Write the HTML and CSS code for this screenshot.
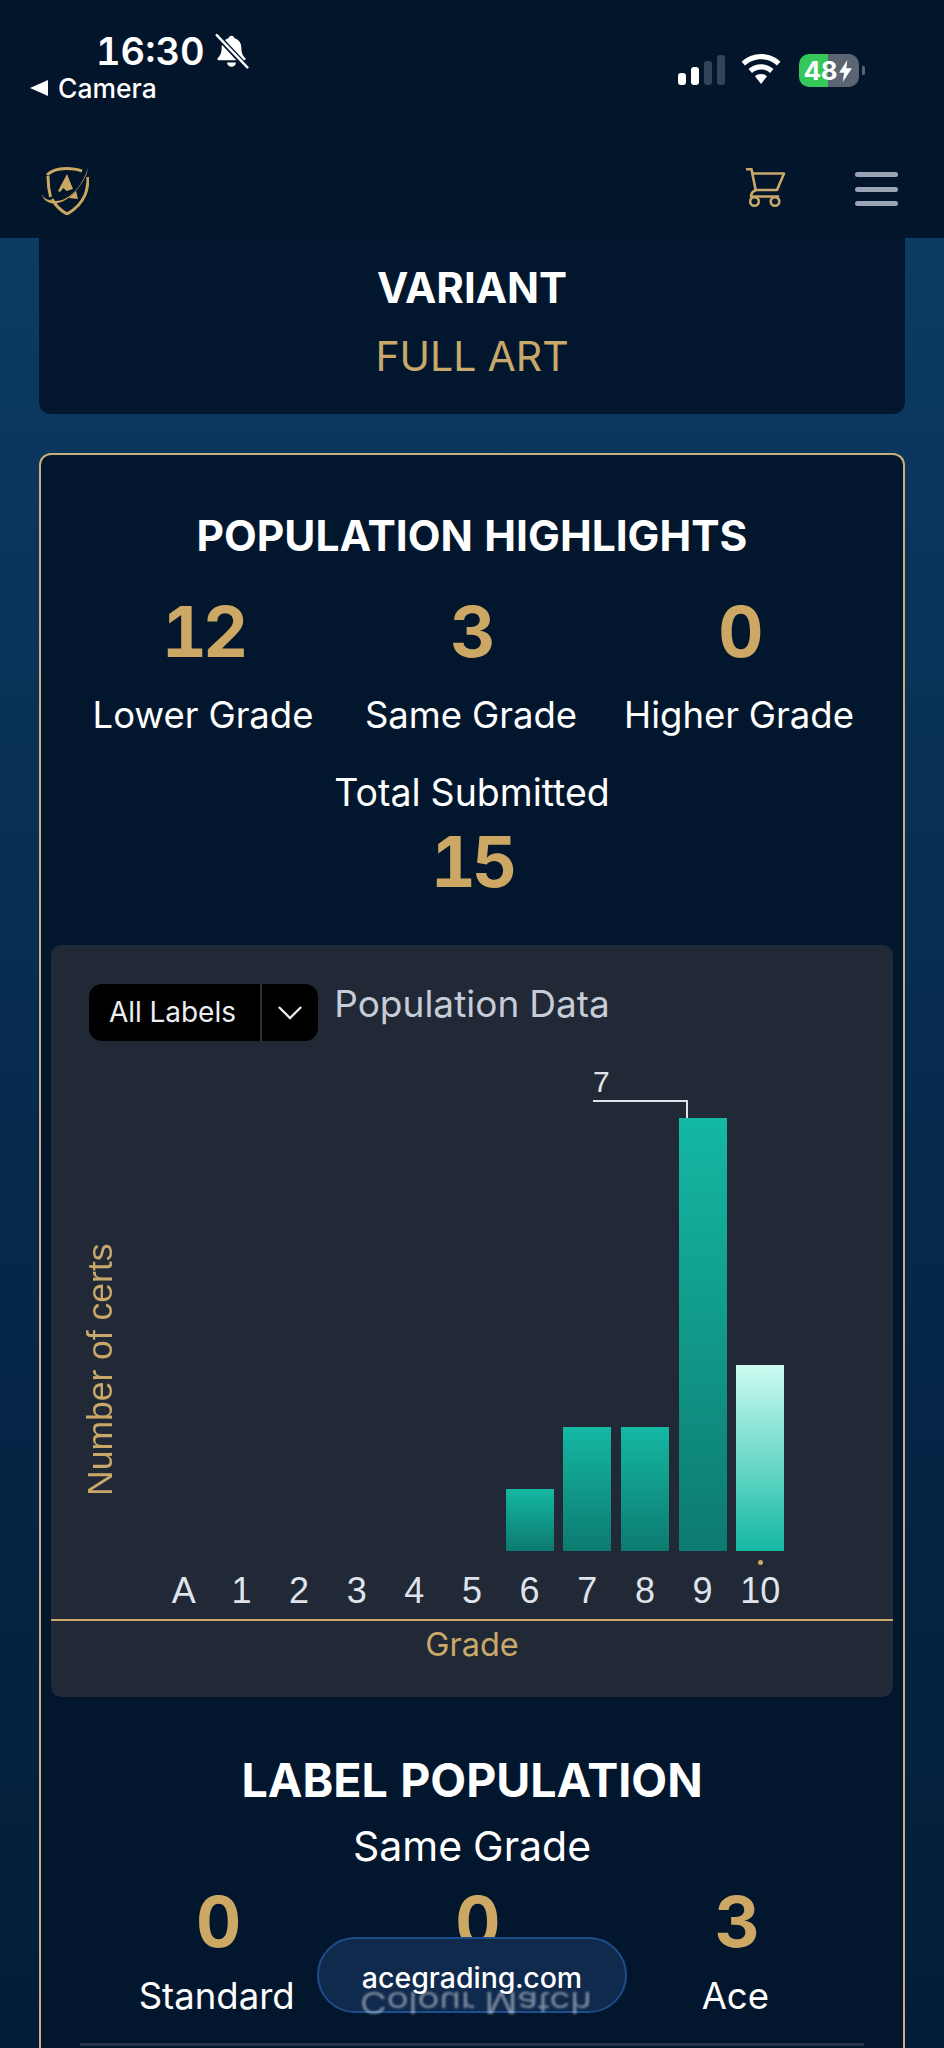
FILE: index.html
```html
<!DOCTYPE html>
<html lang="en">
<head>
<meta charset="utf-8">
<title>Population Report</title>
<link rel="stylesheet" href="styles.css">
</head>
<body>
<header class="topbar">
  <div class="status">
    <div class="status-left">
      <div class="time-row">
        <span class="time">16:30</span>
        <svg class="bell" viewBox="0 0 32 32"><path fill="#fff" d="M16 2c-1.500 0-2.500 1-2.700 2.300C9 5.500 7 9 7 13c0 5-1.500 7.500-3.500 9.500-.8.800-.3 2 .8 2h23.400c1.100 0 1.600-1.200.8-2C26.500 20.500 25 18 25 13c0-4-2-7.500-6.300-8.700C18.500 3 17.500 2 16 2z"/><path fill="#fff" d="M12 26.500h8a4 4 0 0 1-8 0z"/><path stroke="#02152b" stroke-width="5" d="M2 1l28 30"/><path stroke="#fff" stroke-width="2.200" stroke-linecap="round" d="M2.500 1.500l28 29.500"/></svg>
      </div>
      <div class="back-row"><span class="back-arrow"></span><span class="back-text">Camera</span></div>
    </div>
    <div class="status-right">
      <div class="signal"><i class="sig s1"></i><i class="sig s2"></i><i class="sig s3"></i><i class="sig s4"></i></div>
      <svg class="wifi" viewBox="0 0 40 30"><path fill="#fff" d="M20 0C12.500 0 5.700 3 .6 7.700L4 11.500C8.200 7.600 13.800 5.200 20 5.200s11.800 2.400 16 6.300l3.400-3.800C34.300 3 27.500 0 20 0z"/><path fill="#fff" d="M20 10.200c-4.800 0-9.200 1.900-12.500 4.900l3.500 3.900c2.400-2.200 5.500-3.500 9-3.500s6.600 1.300 9 3.500l3.500-3.900c-3.300-3-7.700-4.900-12.500-4.900z"/><path fill="#fff" d="M20 20c-2.300 0-4.400.900-6 2.300L20 30l6-7.700C24.400 20.900 22.300 20 20 20z"/></svg>
      <div class="battery">
        <div class="battery-body">
          <span class="battery-num">48</span>
          <svg class="bolt" viewBox="0 0 14 24"><path fill="#fff" d="M9 0L0 14h5.500L4 24l10-15H8z"/></svg>
        </div>
        <span class="battery-nub"></span>
      </div>
    </div>
  </div>
  <nav class="navbar">
    <svg class="logo" viewBox="0 0 48 50" fill="none" stroke="#cba862"><path stroke-width="3" d="M6 10C10 6 18 3.500 25 3.500c6 0 12 1 16 2.500"/><path stroke-width="3" d="M7 11c0 8 1 15 2.500 21"/><path stroke-width="3" d="M47 12c0 7-1 13-3 18-3 7-9 14-18 19-7-4-12-9-15-15"/><path fill="#cba862" stroke="none" d="M.5 29c2 5 9 7 14 7 13 0 26-13 32.500-33-.5 5-3 10-5.500 14C34 29 24 38.500 13 38.500 7 38.500 1.500 34 .5 29z"/><path fill="#cba862" stroke="none" d="M26 9l6 15-6.500 2-3-3-3.500 4-2-1z"/><path fill="#cba862" stroke="none" d="M28 33l7-7 2 8z"/></svg>
    <div class="nav-actions">
      <svg class="cart" viewBox="0 0 40 40" fill="none" stroke="#c9a86a" stroke-width="2.600" stroke-linecap="round" stroke-linejoin="round"><path d="M.8 1.200h4.700l4.200 21"/><path d="M6.300 5.500H38L31 22H9.700"/><path d="M9.700 22c-3 1.500-4.700 3.500-4.700 6.500h27"/><circle cx="8.500" cy="33.500" r="4.300"/><circle cx="29" cy="33.500" r="4.300"/></svg>
      <div class="menu"><i></i><i></i><i></i></div>
    </div>
  </nav>
</header>

<main class="content">
  <section class="card card-plain">
    <h2 class="variant-title">VARIANT</h2>
    <p class="variant-value">FULL ART</p>
  </section>

  <section class="card card-gold">
    <h2 class="section-title">POPULATION HIGHLIGHTS</h2>
    <div class="stats stats-wide">
      <div class="stat"><div class="stat-value">12</div><div class="stat-label">Lower Grade</div></div>
      <div class="stat"><div class="stat-value">3</div><div class="stat-label">Same Grade</div></div>
      <div class="stat"><div class="stat-value">0</div><div class="stat-label">Higher Grade</div></div>
    </div>
    <div class="total">
      <div class="stat-label">Total Submitted</div>
      <div class="stat-value total-value">15</div>
    </div>

    <div class="chart">
      <div class="dropdown">
        <span class="dropdown-text">All Labels</span>
        <span class="dropdown-arrow"><svg viewBox="0 0 28 16" fill="none" stroke="#eceef2" stroke-width="2.400"><path d="M2 2l12 12L26 2"/></svg></span>
      </div>
      <div class="chart-title">Population Data</div>
      <div class="chart-body">
        <div class="y-axis"><span>Number of certs</span></div>
        <div class="plot-wrap">
          <div class="plot">
            <div class="cell"></div><div class="cell"></div><div class="cell"></div><div class="cell"></div><div class="cell"></div><div class="cell"></div>
            <div class="cell"><div class="bar h1"></div></div>
            <div class="cell"><div class="bar h2"></div></div>
            <div class="cell"><div class="bar h2"></div></div>
            <div class="cell"><div class="bar h7"></div></div>
            <div class="cell"><div class="bar h3 bar-light"></div></div>
            <div class="leader"><span class="leader-num">7</span></div>
          </div>
          <div class="dot-row"><span class="dot"></span></div>
          <div class="grades">
            <span>A</span><span>1</span><span>2</span><span>3</span><span>4</span><span>5</span><span>6</span><span>7</span><span>8</span><span>9</span><span>10</span>
          </div>
        </div>
      </div>
      <div class="x-line"></div>
      <div class="x-title">Grade</div>
    </div>

    <h2 class="section-title label-title">LABEL POPULATION</h2>
    <div class="sub-title">Same Grade</div>
    <div class="stats stats-narrow">
      <div class="stat"><div class="stat-value">0</div><div class="stat-label">Standard</div></div>
      <div class="stat"><div class="stat-value">0</div><div class="stat-label stat-ghost">Colour Match</div></div>
      <div class="stat"><div class="stat-value">3</div><div class="stat-label">Ace</div></div>
    </div>
    <div class="separator"></div>
  </section>
</main>

<div class="url-pill"><span>acegrading.com</span></div>
</body>
</html>
```
FILE: styles.css
```css
* { box-sizing: border-box; }
html, body { margin: 0; padding: 0; }
body {
  position: relative;
  width: 944px;
  height: 2048px;
  overflow: hidden;
  font-family: Inter, "Liberation Sans", sans-serif;
  font-variant-numeric: tabular-nums;
  color: #fff;
  background: linear-gradient(180deg, #0c3b63 0, #0c3b63 240px, #062a4d 1100px, #031d38 2048px);
}
h2, p { margin: 0; }

/* header */
.topbar { height: 238px; background: #02152b; }
.status { height: 130px; display: flex; justify-content: space-between; }
.status-left { padding: 30px 0 0 30px; }
.time-row { display: flex; align-items: center; padding-left: 66px; height: 42px; }
.time { font-size: 38px; font-weight: 600; line-height: 42px; }
.bell { width: 35px; height: 36px; margin-left: 9px; }
.back-row { display: flex; align-items: center; height: 32px; margin-top: 0; }
.back-arrow { width: 0; height: 0; border-style: solid; border-width: 8.500px 18px 8.500px 0; border-color: transparent #fff transparent transparent; }
.back-text { margin-left: 10px; font-size: 26.500px; font-weight: 500; line-height: 32px; }
.status-right { display: flex; align-items: flex-start; padding: 54px 79px 0 0; }
.signal { display: flex; align-items: flex-end; gap: 4.500px; height: 31px; }
.sig { display: block; width: 8.500px; border-radius: 3px; background: #fff; }
.s1 { height: 12px; }
.s2 { height: 18px; }
.s3 { height: 24px; background: #33435a; }
.s4 { height: 30px; background: #33435a; }
.wifi { width: 40px; height: 30px; margin-left: 16px; }
.battery { display: flex; align-items: center; margin-left: 18px; }
.battery-body {
  width: 60px; height: 33px; border-radius: 10px;
  display: flex; align-items: center; padding-left: 5px;
  background: linear-gradient(90deg, #35c759 0, #35c759 29px, #5b6472 29px, #5b6472 100%);
}
.battery-num { font-size: 26px; font-weight: 700; line-height: 33px; }
.bolt { width: 13px; height: 22px; margin-left: 1px; }
.battery-nub { width: 3px; height: 9px; margin-left: 3px; border-radius: 0 2px 2px 0; background: #5b6472; }
.navbar { height: 108px; display: flex; justify-content: space-between; padding: 35px 46px 0 41px; }
.logo { width: 48px; height: 50px; }
.nav-actions { display: flex; gap: 69px; padding-top: 3px; }
.cart { width: 40px; height: 40px; }
.menu { display: flex; flex-direction: column; gap: 9.500px; padding-top: 4px; }
.menu i { display: block; width: 43px; height: 5px; border-radius: 3px; background: #9aa4b5; }

/* cards */
.content { display: flex; flex-direction: column; gap: 39px; padding: 0 39px; }
.card { background: #02172d; }
.card-plain { height: 176px; border-radius: 0 0 12px 12px; text-align: center; padding-top: 28px; }
.variant-title { font-size: 42px; font-weight: 700; line-height: 44px; }
.variant-value { margin-top: 24px; font-size: 41px; font-weight: 400; line-height: 44px; color: #c9a86a; }
.card-gold { border: 2px solid #c6ae80; border-bottom: 0; border-radius: 12px 12px 0 0; padding: 56px 10px 0; height: 1700px; }
.section-title { text-align: center; font-size: 42.500px; font-weight: 700; line-height: 50px; }

.stats { display: grid; grid-template-columns: repeat(3, 1fr); text-align: center; }
.stats-wide { width: 804px; margin: 36px auto 0; transform: translateX(-1px); }
.stats-narrow { width: 778px; margin: 19px 0 0 36px; }
.stat-value { font-size: 70px; font-weight: 700; line-height: 70px; letter-spacing: -4px; color: #cda864; }
.stat-label { font-size: 36.500px; line-height: 44px; margin-top: 26px; white-space: nowrap; }
.stats-narrow .stat-label { margin-top: 17px; }
.total { margin-top: 34px; text-align: center; }
.total .stat-label { margin-top: 0; font-size: 37.500px; }
.total-value { margin-top: 12px; }

/* chart */
.chart { position: relative; height: 752px; margin-top: 48px; border-radius: 10px; background: #212836; }
.dropdown {
  position: absolute; left: 38px; top: 39px;
  display: flex; width: 229px; height: 57px; border-radius: 13px; background: #000;
}
.dropdown-text { flex: 1; padding-left: 20px; font-size: 28px; line-height: 57px; color: #eceef2; }
.dropdown-arrow { width: 58px; display: flex; align-items: center; justify-content: center; border-left: 2px solid #2b2f38; }
.dropdown-arrow svg { width: 26px; height: 15px; }
.chart-title { height: 130px; padding-top: 39px; text-align: center; font-size: 37px; line-height: 40px; color: #c6ccd8; }
.chart-body { display: flex; }
.y-axis { width: 104px; padding-right: 6px; height: 476px; display: flex; justify-content: center; }
.y-axis span {
  writing-mode: vertical-rl; transform: rotate(180deg);
  height: 256px; margin-top: 165px;
  text-align: left; white-space: nowrap;
  font-family: "Liberation Sans", sans-serif; font-size: 35.500px; line-height: 36px; color: #c9a86a;
}
.plot-wrap { width: 634px; }
.plot { position: relative; height: 476px; display: grid; grid-template-columns: repeat(11, 1fr); }
.cell { display: flex; align-items: flex-end; justify-content: center; }
.bar { width: 48px; background: linear-gradient(180deg, #14b8a3 0%, #0d7a70 100%); }
.bar-light { background: linear-gradient(180deg, #ccfbf1 0%, #14b8a3 100%); }
.h1 { height: 62px; }
.h2 { height: 124px; }
.h3 { height: 186px; }
.h7 { height: 433px; }
.leader {
  position: absolute; left: 438px; top: 25px; width: 95px; height: 18px;
  border-top: 2px solid #e0e4ea; border-right: 2px solid #e0e4ea;
}
.leader-num {
  position: absolute; left: 0; bottom: 100%; margin-bottom: 5px;
  font-family: "Liberation Sans", sans-serif; font-size: 30px; line-height: 30px; color: #e0e4ea;
}
.dot-row { height: 20px; display: flex; justify-content: flex-end; padding: 9px 26px 0 0; }
.dot { width: 5px; height: 5px; border-radius: 50%; background: #c9a86a; }
.grades { display: grid; grid-template-columns: repeat(11, 1fr); text-align: center; font-family: "Liberation Sans", sans-serif; font-size: 36px; line-height: 40px; color: #dfe3ec; }
.x-line { height: 2px; margin-top: 8px; background: #c9a86a; }
.x-title { margin-top: 4px; text-align: center; font-size: 32.500px; line-height: 40px; color: #c9a86a; }

.label-title { margin-top: 56px; font-size: 46.500px; line-height: 54px; }
.sub-title { margin-top: 17px; text-align: center; font-size: 41px; line-height: 44px; }
.separator { height: 3px; margin: 25px 29px 0 29px; background: #28344a; }

/* url pill */
.url-pill {
  position: absolute; left: 317px; top: 1937px; z-index: 2;
  width: 310px; height: 76px; padding-top: 20px;
  border: 2px solid #1d4d8c; border-radius: 38px;
  background: #0f2a4d; text-align: center;
  font-size: 28.500px; font-weight: 500; line-height: 38px; color: #fff;
}
.stat-ghost {
  position: relative; z-index: 3;
  transform: translateY(6px) scaleY(-.8);
  filter: blur(1px); opacity: .45;
}
```
